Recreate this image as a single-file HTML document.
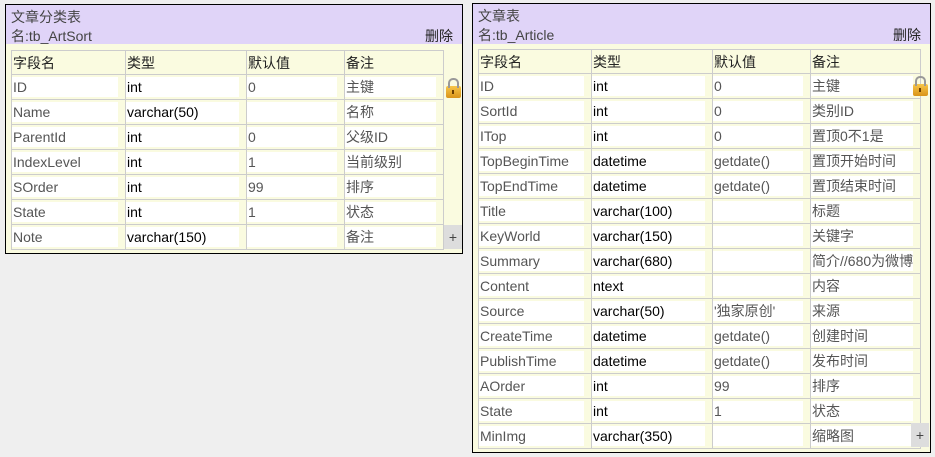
<!DOCTYPE html>
<html><head><meta charset="utf-8"><style>
body{margin:0;background:#efefef;font-family:"Liberation Sans","Noto Sans CJK SC",sans-serif;font-size:14px;width:935px;height:457px;overflow:hidden;position:relative}
.box{position:absolute;border:1px solid #000;background:#fafbe0;box-sizing:border-box}
.hd{background:#e0d4f8;height:39px;position:relative;color:#444}
.hd .t{position:absolute;left:5px;top:2px}
.hd .n{position:absolute;left:5px;top:21px}
.hd .d{position:absolute;right:9px;top:21px;color:#222}
table{position:absolute;border-collapse:collapse;table-layout:fixed}
td{border:1px solid #ccc;height:24px;padding:0;vertical-align:middle}
td div{background:#fff;height:20px;line-height:20px;margin-right:7px;padding-left:1px;white-space:nowrap;overflow:hidden;color:#000}
td.f div{color:#555}
tr.h td{background:#fafbe0;color:#222;padding-left:1px;height:23px}
.lock{position:absolute;width:15px;height:12px;background:linear-gradient(#f7c64a,#d9941a);border-radius:2px}
.lock:before{content:"";position:absolute;left:2px;top:-8px;width:7px;height:8px;border:2px solid #999;border-bottom:0;border-radius:5px 5px 0 0}
.lock:after{content:"";position:absolute;left:6px;top:4px;width:2px;height:4px;background:#6a3d00}
.plus{position:absolute;width:18px;height:24px;background:#ddd;color:#444;text-align:center;line-height:24px;font-size:14px}
</style></head><body>
<div class="box" style="left:5px;top:4px;width:458px;height:250px">
<div class="hd"><span class="t">文章分类表</span><span class="n">名:tb_ArtSort</span><span class="d">删除</span></div>
<table style="left:5px;top:45px">
<colgroup><col style="width:114px"><col style="width:121px"><col style="width:98px"><col style="width:99px"></colgroup>
<tr class="h"><td>字段名</td><td>类型</td><td>默认值</td><td>备注</td></tr>
<tr><td class="f"><div>ID</div></td><td><div>int</div></td><td class="f"><div>0</div></td><td class="f"><div>主键</div></td></tr>
<tr><td class="f"><div>Name</div></td><td><div>varchar(50)</div></td><td><div></div></td><td class="f"><div>名称</div></td></tr>
<tr><td class="f"><div>ParentId</div></td><td><div>int</div></td><td class="f"><div>0</div></td><td class="f"><div>父级ID</div></td></tr>
<tr><td class="f"><div>IndexLevel</div></td><td><div>int</div></td><td class="f"><div>1</div></td><td class="f"><div>当前级别</div></td></tr>
<tr><td class="f"><div>SOrder</div></td><td><div>int</div></td><td class="f"><div>99</div></td><td class="f"><div>排序</div></td></tr>
<tr><td class="f"><div>State</div></td><td><div>int</div></td><td class="f"><div>1</div></td><td class="f"><div>状态</div></td></tr>
<tr><td class="f"><div>Note</div></td><td><div>varchar(150)</div></td><td><div></div></td><td class="f"><div>备注</div></td></tr>
</table>
<div class="lock" style="left:440px;top:81px"></div>
<div class="plus" style="left:438px;top:220px">+</div>
</div>

<div class="box" style="left:472px;top:3px;width:459px;height:450px">
<div class="hd" style="height:40px"><span class="t">文章表</span><span class="n">名:tb_Article</span><span class="d">删除</span></div>
<table style="left:5px;top:45px">
<colgroup><col style="width:113px"><col style="width:121px"><col style="width:98px"><col style="width:100px"></colgroup>
<tr class="h"><td>字段名</td><td>类型</td><td>默认值</td><td>备注</td></tr>
<tr><td class="f"><div>ID</div></td><td><div>int</div></td><td class="f"><div>0</div></td><td class="f"><div>主键</div></td></tr>
<tr><td class="f"><div>SortId</div></td><td><div>int</div></td><td class="f"><div>0</div></td><td class="f"><div>类别ID</div></td></tr>
<tr><td class="f"><div>ITop</div></td><td><div>int</div></td><td class="f"><div>0</div></td><td class="f"><div>置顶0不1是</div></td></tr>
<tr><td class="f"><div>TopBeginTime</div></td><td><div>datetime</div></td><td class="f"><div>getdate()</div></td><td class="f"><div>置顶开始时间</div></td></tr>
<tr><td class="f"><div>TopEndTime</div></td><td><div>datetime</div></td><td class="f"><div>getdate()</div></td><td class="f"><div>置顶结束时间</div></td></tr>
<tr><td class="f"><div>Title</div></td><td><div>varchar(100)</div></td><td><div></div></td><td class="f"><div>标题</div></td></tr>
<tr><td class="f"><div>KeyWorld</div></td><td><div>varchar(150)</div></td><td><div></div></td><td class="f"><div>关键字</div></td></tr>
<tr><td class="f"><div>Summary</div></td><td><div>varchar(680)</div></td><td><div></div></td><td class="f"><div>简介//680为微博</div></td></tr>
<tr><td class="f"><div>Content</div></td><td><div>ntext</div></td><td><div></div></td><td class="f"><div>内容</div></td></tr>
<tr><td class="f"><div>Source</div></td><td><div>varchar(50)</div></td><td class="f"><div>'独家原创'</div></td><td class="f"><div>来源</div></td></tr>
<tr><td class="f"><div>CreateTime</div></td><td><div>datetime</div></td><td class="f"><div>getdate()</div></td><td class="f"><div>创建时间</div></td></tr>
<tr><td class="f"><div>PublishTime</div></td><td><div>datetime</div></td><td class="f"><div>getdate()</div></td><td class="f"><div>发布时间</div></td></tr>
<tr><td class="f"><div>AOrder</div></td><td><div>int</div></td><td class="f"><div>99</div></td><td class="f"><div>排序</div></td></tr>
<tr><td class="f"><div>State</div></td><td><div>int</div></td><td class="f"><div>1</div></td><td class="f"><div>状态</div></td></tr>
<tr><td class="f"><div>MinImg</div></td><td><div>varchar(350)</div></td><td><div></div></td><td class="f"><div>缩略图</div></td></tr>
</table>
<div class="lock" style="left:440px;top:80px"></div>
<div class="plus" style="left:438px;top:419px">+</div>
</div>
</body></html>
